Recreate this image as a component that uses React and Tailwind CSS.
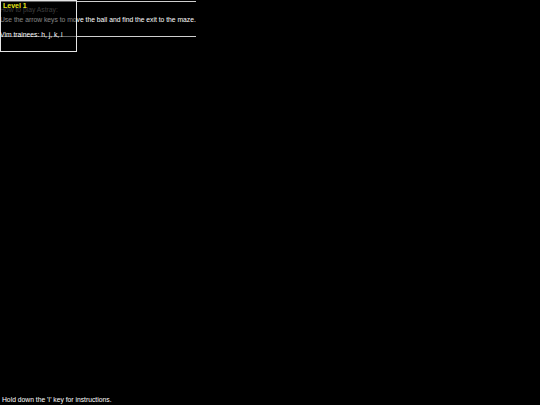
export default function App() {
  return (
    <div className="relative w-[540px] h-[405px] bg-black text-white overflow-hidden" style={{ fontFamily: '"Liberation Sans", Arial, sans-serif' }}>
      <div className="w-[196px] h-[36px] border-t border-b border-[#cfcfcf] mt-px text-[6.75px] leading-[8px] whitespace-nowrap">
        <div className="pt-[4px] text-[#7a7a7a]">How to play Astray:</div>
        <div className="mt-[2px]">Use the arrow keys to move the ball and find the exit to the maze.</div>
        <div className="relative z-20 mt-[7px]">Vim trainees: h, j, k, l</div>
      </div>
      <div className="absolute left-0 top-0 z-10 w-[77px] h-[52px] border border-[#e5e5e5] bg-black/50">
        <div className="pl-[2px] pt-[1px] text-[7px] leading-[8px] font-bold text-[#e8e81a]">Level 1</div>
      </div>
      <div className="absolute left-[2px] bottom-[1px] text-[6.75px] leading-[8px] whitespace-nowrap">Hold down the 'I' key for instructions.</div>
    </div>
  );
}
